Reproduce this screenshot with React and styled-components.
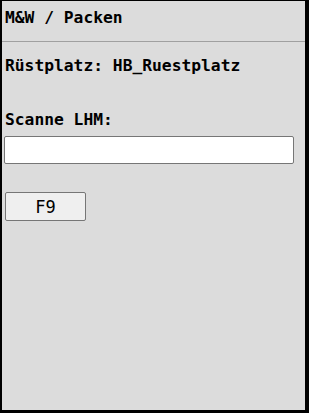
import styled, { createGlobalStyle } from "styled-components";

const GlobalStyle = createGlobalStyle`
  html, body {
    margin: 0;
    padding: 0;
    background: #dcdcdc;
  }
  * {
    box-sizing: border-box;
  }
`;

const Frame = styled.div`
  width: 309px;
  height: 413px;
  background: #dcdcdc;
  border-style: solid;
  border-color: #000;
  border-width: 1px 4px 3px 2px;
  font-family: "DejaVu Sans Mono", "Liberation Mono", monospace;
  color: #000;
  display: flex;
  flex-direction: column;
`;

const Title = styled.div`
  font-size: 16.3px;
  font-weight: bold;
  line-height: 20px;
  padding: 7px 0 0 3px;
  height: 40px;
`;

const Rule = styled.hr`
  margin: 0;
  border: none;
  height: 1px;
  background: #a0a0a0;
`;

const Body = styled.div`
  display: flex;
  flex-direction: column;
  padding: 14px 0 0 0;
`;

const Label = styled.div`
  font-size: 16.3px;
  font-weight: bold;
  line-height: 20px;
  padding-left: 3px;
  margin-bottom: ${(p) => p.gap || 0}px;
`;

const Input = styled.input`
  width: 290px;
  height: 28px;
  margin: 0 0 0 2px;
  border: 1px solid #767676;
  border-radius: 2px;
  background: #fff;
  font-family: "DejaVu Sans Mono", monospace;
  font-size: 15px;
  outline: none;
`;

const Key = styled.button`
  width: 81px;
  height: 29px;
  margin: 28px 0 0 3px;
  border: 1px solid #767676;
  border-radius: 2px;
  background: #efefef;
  color: #000;
  font-family: "DejaVu Sans Mono", monospace;
  font-size: 17px;
  padding: 0;
  cursor: pointer;
`;

export default function App() {
  return (
    <>
      <GlobalStyle />
      <Frame>
        <Title>M&amp;W / Packen</Title>
        <Rule />
        <Body>
          <Label gap={34}>Rüstplatz: HB_Ruestplatz</Label>
          <Label gap={6}>Scanne LHM:</Label>
          <Input type="text" />
          <div>
            <Key>F9</Key>
          </div>
        </Body>
      </Frame>
    </>
  );
}
